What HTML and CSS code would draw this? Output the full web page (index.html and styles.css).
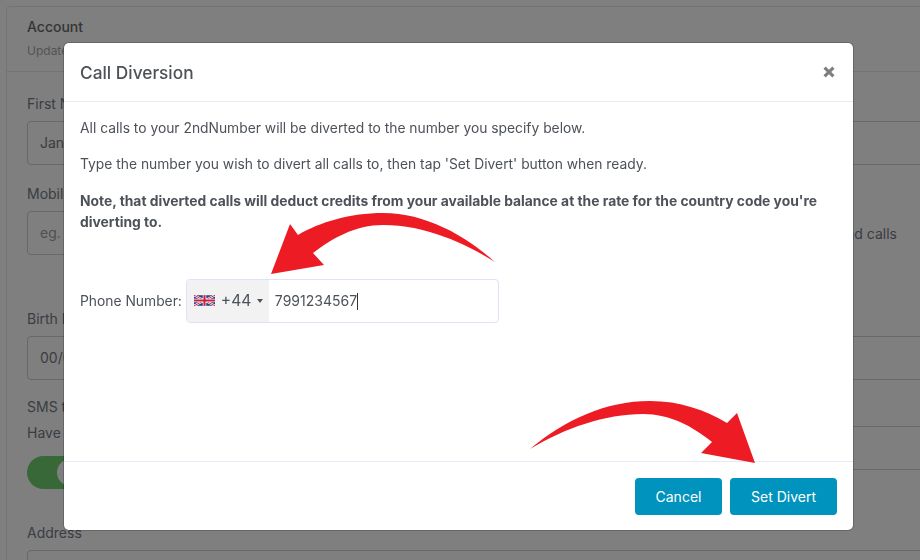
FILE: index.html
```html
<!DOCTYPE html>
<html lang="en">
<head>
    <meta charset="UTF-8">
    <title>Call Diversion</title>
    <link rel="stylesheet" href="styles.css">
</head>
<body>
    <div class="page">
        <div class="card">
            <div class="card-header">
                <div class="card-title">Account</div>
                <div class="card-sub">Update your account details</div>
            </div>
            <div class="card-body">
                <div class="bg-label">First Name</div>
                <div class="bg-input">Jane</div>
                <div class="bg-label mobile-label">Mobile</div>
                <div class="mobile-row">
                    <div class="bg-input mobile-input">eg.</div>
                    <div class="bg-hint">and calls</div>
                </div>
                <div class="bg-label birth-label">Birth Date</div>
                <div class="bg-input">00/00/0000</div>
                <div class="sms-row">
                    <div>
                        <div class="bg-label sms-label">SMS to email</div>
                        <div class="bg-label have-label">Have texts sent</div>
                        <div class="toggle"><span class="toggle-knob"></span></div>
                    </div>
                    <div class="bg-input sms-input"></div>
                </div>
                <div class="bg-label address-label">Address</div>
                <div class="bg-input"></div>
            </div>
        </div>
    </div>

    <div class="overlay"></div>

    <div class="modal">
        <div class="modal-header">
            <h3>Call Diversion</h3>
            <svg class="close-icon" width="12" height="12" viewBox="0 0 12 12">
                <path d="M1.6 1.6 L10.4 10.4 M10.4 1.6 L1.6 10.4" stroke="#7f7f7f" stroke-width="3.2" fill="none"/>
            </svg>
        </div>
        <div class="modal-body">
            <p>All calls to your 2ndNumber will be diverted to the number you specify below.</p>
            <p>Type the number you wish to divert all calls to, then tap 'Set Divert' button when ready.</p>
            <p class="note">Note, that diverted calls will deduct credits from your available balance at the rate for the country code you're diverting to.</p>
            <div class="phone-row">
                <label>Phone Number:</label>
                <div class="phone-input">
                    <div class="dial-code">
                        <svg class="flag" width="21" height="11" viewBox="0 0 60 30">
                            <rect width="60" height="30" fill="#2b3f87"/>
                            <path d="M0 0 L60 30 M60 0 L0 30" stroke="#fff" stroke-width="6"/>
                            <path d="M0 0 L60 30 M60 0 L0 30" stroke="#c8203c" stroke-width="2.5"/>
                            <path d="M30 0 V30 M0 15 H60" stroke="#fff" stroke-width="10"/>
                            <path d="M30 0 V30 M0 15 H60" stroke="#c8203c" stroke-width="6"/>
                        </svg>
                        <span class="code">+44</span>
                        <span class="caret"></span>
                    </div>
                    <div class="number">7991234567<span class="cursor"></span></div>
                </div>
            </div>
        </div>
        <div class="modal-footer">
            <button>Cancel</button>
            <button class="divert-btn">Set Divert</button>
        </div>
    </div>

    <!-- red arrows pasted over the screenshot -->
    <svg class="arrows" width="920" height="560" viewBox="0 0 920 560">
        <path fill="#ed1c24" d="M271 274 L290 224 L298 235 C320 222 350 213 383 213 C425 213 465 235 495 262 C465 243 425 225 383 225 C355 225 333 238 313 253 L324 265 Z"/>
        <path fill="#ed1c24" d="M755 463 L737 413 L727 423 C705 410 680 401 650 401 C605 401 565 420 530 449 C565 428 605 414 643 414 C670 414 692 426 712 442 L701 453 Z"/>
    </svg>
</body>
</html>
```

FILE: styles.css
```css
* {
    box-sizing: border-box;
}
html, body {
    margin: 0;
    height: 100%;
    overflow: hidden;
}
body {
    font-family: Inter, 'Noto Sans', sans-serif;
    font-size: 14px;
    color: #757a85;
    background: #fff;
}
.page {
    height: 560px;
    padding: 6px;
    overflow: hidden;
}
.card {
    border: 1px solid #e6e6f2;
    border-radius: 4px;
    width: 940px;
    height: 700px;
}
.card-header {
    height: 65px;
    padding: 11px 20px;
    border-bottom: 1px solid #e4e4ee;
}
.card-title {
    font-size: 14px;
    font-weight: 500;
    color: #6a6a6a;
    line-height: 18px;
}
.card-sub {
    font-size: 12px;
    color: #a8a8a8;
    margin-top: 7px;
    line-height: 15px;
}
.card-body {
    padding: 23px 20px;
}
.bg-label {
    font-size: 14px;
    line-height: 17px;
    margin-bottom: 9px;
}
.bg-input {
    height: 44px;
    border: 1px solid #d0d0d0;
    border-radius: 4px;
    padding: 0 12px;
    line-height: 42px;
    font-size: 14px;
}
.mobile-label {
    margin-top: 20px;
}
.mobile-row {
    display: flex;
    justify-content: space-between;
    align-items: center;
    padding-right: 28px;
}
.mobile-input {
    width: 700px;
    color: #a0a0a0;
}
.bg-hint {
    white-space: nowrap;
}
.birth-label {
    margin-top: 55px;
}
.sms-row {
    display: flex;
    justify-content: space-between;
}
.sms-input {
    width: 500px;
    margin-top: 46px;
}
.sms-label {
    margin-top: 18px;
}
.toggle {
    width: 60px;
    height: 33px;
    background: #70d070;
    border-radius: 17px;
    margin-top: 15px;
    padding: 3px;
    display: flex;
    justify-content: flex-end;
}
.toggle-knob {
    display: block;
    width: 27px;
    height: 27px;
    border-radius: 50%;
    background: #fff;
}
.address-label {
    margin-top: 35px;
}
.overlay {
    position: fixed;
    inset: 0;
    background: rgba(0, 0, 0, 0.5);
}
.modal {
    position: fixed;
    left: 64px;
    top: 43px;
    width: 789px;
    height: 487px;
    background: #fff;
    border-radius: 5px;
    box-shadow: 0 0 0 1px rgba(0, 0, 0, 0.2);
    display: flex;
    flex-direction: column;
    color: #4d5259;
}
.modal-header {
    height: 59px;
    padding: 0 16px;
    border-bottom: 1px solid #e8e8f4;
    display: flex;
    align-items: center;
    justify-content: space-between;
}
.modal-header h3 {
    margin: 0;
    font-size: 17.3px;
    font-weight: 500;
}
.close-icon {
    margin-right: 2px;
}
.modal-body {
    flex: 1;
    padding: 16px;
}
.modal-body p {
    margin: 0 0 15.5px;
    font-size: 13.83px;
    line-height: 20.75px;
}
.modal-body .note {
    line-height: 21.5px;
}
.note {
    font-weight: 700;
}
.phone-row {
    display: flex;
    align-items: center;
    gap: 4px;
    margin-top: 45px;
}
.phone-row label {
    font-size: 13.83px;
}
.phone-input {
    width: 313px;
    height: 44px;
    border: 1px solid #e0e0f8;
    border-radius: 4px;
    display: flex;
    overflow: hidden;
}
.dial-code {
    width: 82px;
    background: #f2f2f2;
    display: flex;
    align-items: center;
    padding-left: 7px;
}
.code {
    font-size: 15.6px;
    margin-left: 6px;
}
.caret {
    border-left: 3px solid transparent;
    border-right: 3px solid transparent;
    border-top: 4px solid #555;
    margin-left: 6px;
}
.number {
    padding-left: 6px;
    line-height: 42px;
    font-size: 14px;
}
.cursor {
    display: inline-block;
    width: 1px;
    height: 17px;
    background: #333;
    vertical-align: middle;
}
.modal-footer {
    height: 69px;
    padding: 0 16px;
    border-top: 1px solid #e8e8f4;
    display: flex;
    justify-content: flex-end;
    align-items: center;
    gap: 8px;
}
button {
    height: 37px;
    width: 87px;
    background: #0093bd;
    color: #fff;
    border: none;
    border-radius: 4px;
    font-family: Inter, sans-serif;
    font-size: 14px;
    padding: 1px 0 0;
}
.divert-btn {
    width: 107px;
}
.arrows {
    position: fixed;
    left: 0;
    top: 0;
    pointer-events: none;
}
```
